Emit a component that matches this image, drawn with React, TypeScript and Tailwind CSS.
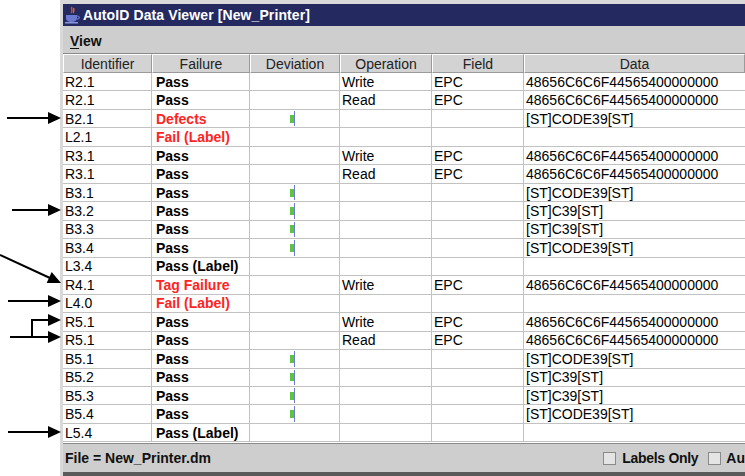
import React from "react";

type Row = {
  id: string;
  fail: string;
  red?: boolean;
  bar?: boolean;
  op?: string;
  field?: string;
  data?: string;
};

const HEX = "48656C6C6F44565400000000";

const rows: Row[] = [
  { id: "R2.1", fail: "Pass", op: "Write", field: "EPC", data: HEX },
  { id: "R2.1", fail: "Pass", op: "Read", field: "EPC", data: HEX },
  { id: "B2.1", fail: "Defects", red: true, bar: true, data: "[ST]CODE39[ST]" },
  { id: "L2.1", fail: "Fail (Label)", red: true },
  { id: "R3.1", fail: "Pass", op: "Write", field: "EPC", data: HEX },
  { id: "R3.1", fail: "Pass", op: "Read", field: "EPC", data: HEX },
  { id: "B3.1", fail: "Pass", bar: true, data: "[ST]CODE39[ST]" },
  { id: "B3.2", fail: "Pass", bar: true, data: "[ST]C39[ST]" },
  { id: "B3.3", fail: "Pass", bar: true, data: "[ST]C39[ST]" },
  { id: "B3.4", fail: "Pass", bar: true, data: "[ST]CODE39[ST]" },
  { id: "L3.4", fail: "Pass (Label)" },
  { id: "R4.1", fail: "Tag Failure", red: true, op: "Write", field: "EPC", data: HEX },
  { id: "L4.0", fail: "Fail (Label)", red: true },
  { id: "R5.1", fail: "Pass", op: "Write", field: "EPC", data: HEX },
  { id: "R5.1", fail: "Pass", op: "Read", field: "EPC", data: HEX },
  { id: "B5.1", fail: "Pass", bar: true, data: "[ST]CODE39[ST]" },
  { id: "B5.2", fail: "Pass", bar: true, data: "[ST]C39[ST]" },
  { id: "B5.3", fail: "Pass", bar: true, data: "[ST]C39[ST]" },
  { id: "B5.4", fail: "Pass", bar: true, data: "[ST]CODE39[ST]" },
  { id: "L5.4", fail: "Pass (Label)" },
];

const headers = ["Identifier", "Failure", "Deviation", "Operation", "Field", "Data"];

function JavaIcon() {
  return (
    <svg width="16" height="18" viewBox="0 0 16 18">
      <path d="M8 1 C6 3 10 4 7 7" stroke="#e04a2a" strokeWidth="1.5" fill="none" />
      <path d="M10 2 C9 4 11 5 9 7" stroke="#e07a3a" strokeWidth="1.2" fill="none" />
      <path d="M2 9 H13 V12 C13 15 10 16 7.5 16 C5 16 2 15 2 12 Z" fill="#6a7ad0" />
      <path d="M13 10 C16 10 16 13 13 13" stroke="#6a7ad0" strokeWidth="1.2" fill="none" />
      <rect x="1" y="16" width="13" height="1.5" fill="#8a96e0" />
    </svg>
  );
}

function Arrows() {
  const head = (x: number, y: number, angle: number, key: string) => (
    <polygon
      key={key}
      points="0,0 -13,-6 -13,6"
      fill="#000"
      transform={`translate(${x} ${y}) rotate(${angle})`}
    />
  );
  const ang = (Math.atan2(283 - 255, 61 - 0) * 180) / Math.PI;
  return (
    <svg className="absolute left-0 top-0" width="70" height="476" viewBox="0 0 70 476">
      <g stroke="#000" strokeWidth="2" fill="none">
        <line x1="7" y1="118" x2="50" y2="118" />
        <line x1="12" y1="210" x2="50" y2="210" />
        <line x1="0" y1="255" x2="50" y2="278" />
        <line x1="8" y1="301" x2="50" y2="301" />
        <polyline points="32,337 32,320 50,320" />
        <line x1="10" y1="337" x2="50" y2="337" />
        <line x1="8" y1="432" x2="50" y2="432" />
      </g>
      {head(61, 118, 0, "a")}
      {head(61, 210, 0, "b")}
      {head(61, 283, ang, "c")}
      {head(61, 301, 0, "d")}
      {head(61, 320, 0, "e")}
      {head(61, 337, 0, "f")}
      {head(61, 432, 0, "g")}
    </svg>
  );
}

export default function App() {
  return (
    <div
      className="relative w-[745px] h-[476px] bg-white overflow-hidden flex"
      style={{ fontFamily: '"Liberation Sans", Arial, sans-serif' }}
    >
      <div className="w-[60px] shrink-0" />
      <div className="flex-1 min-w-0 flex flex-col bg-[#cecece] border-l-[3px] border-t-[4px] border-[#d9d9d9]">
        {/* title bar */}
        <div className="h-[22px] bg-[#242a5f] flex items-center gap-[3px] pl-[1px] shrink-0">
          <JavaIcon />
          <span className="text-white font-bold text-[14px] leading-none tracking-[0.1px]">
            AutoID Data Viewer [New_Printer]
          </span>
        </div>
        {/* menu bar */}
        <div className="h-[27px] flex items-center pl-[7px] pt-[3px] shrink-0 bg-[#cecece]">
          <span className="font-bold text-[14px] text-[#111]">
            <span className="underline underline-offset-2">V</span>iew
          </span>
        </div>
        {/* table */}
        <div className="h-[390px] shrink-0 bg-white border-t border-[#8a8a8a] overflow-hidden">
          <div className="grid grid-cols-[89px_98px_90px_92px_92px_1fr] h-[19px] bg-[#d3d3d3]">
            {headers.map((h) => (
              <div
                key={h}
                className="flex items-center justify-center text-[14px] text-[#222] border-l border-t border-white border-r border-r-[#9a9a9a] border-b border-b-[#9a9a9a] leading-none"
              >
                {h}
              </div>
            ))}
          </div>
          {rows.map((r, i) => (
            <div
              key={i}
              className="grid grid-cols-[89px_98px_90px_92px_92px_1fr] h-[18.47px] text-[14px] leading-none text-black"
            >
              <div className="flex items-center pl-[2px] border-r border-b border-[#c2c2c2]">{r.id}</div>
              <div
                className={`flex items-center pl-[4px] font-bold border-r border-b border-[#c2c2c2] ${
                  r.red ? "text-[#ff2424]" : "text-black"
                }`}
              >
                {r.fail}
              </div>
              <div className="relative flex items-center border-r border-b border-[#c2c2c2]">
                {r.bar && (
                  <div className="flex items-center ml-[40px] h-full py-[1px]">
                    <div className="w-[4px] h-[8px] bg-[#5ec242]" />
                    <div className="w-[1px] h-full bg-[#6c7ccf]" />
                  </div>
                )}
              </div>
              <div className="flex items-center pl-[2px] border-r border-b border-[#c2c2c2]">{r.op}</div>
              <div className="flex items-center pl-[2px] border-r border-b border-[#c2c2c2]">{r.field}</div>
              <div className="flex items-center pl-[2px] border-b border-[#c2c2c2] whitespace-nowrap">
                {r.data}
              </div>
            </div>
          ))}
        </div>
        {/* status bar */}
        <div className="flex-1 flex items-center border-t border-[#8a8a8a] bg-[#cecece] border-b-[4px] border-b-[#5a5a5a]">
          <span className="pl-[2px] font-bold text-[14px] text-[#111]">File = New_Printer.dm</span>
          <div className="ml-auto flex items-center whitespace-nowrap">
            <span className="w-[13px] h-[13px] border border-[#8a8a8a] bg-[#e4e4e4]" />
            <span className="ml-[6px] font-bold text-[14px] text-[#111] tracking-[-0.3px]">Labels Only</span>
            <span className="ml-[10px] w-[13px] h-[13px] border border-[#8a8a8a] bg-[#e4e4e4]" />
            <span className="ml-[5px] font-bold text-[14px] text-[#111]">Au</span>
          </div>
        </div>
      </div>
      <Arrows />
    </div>
  );
}
